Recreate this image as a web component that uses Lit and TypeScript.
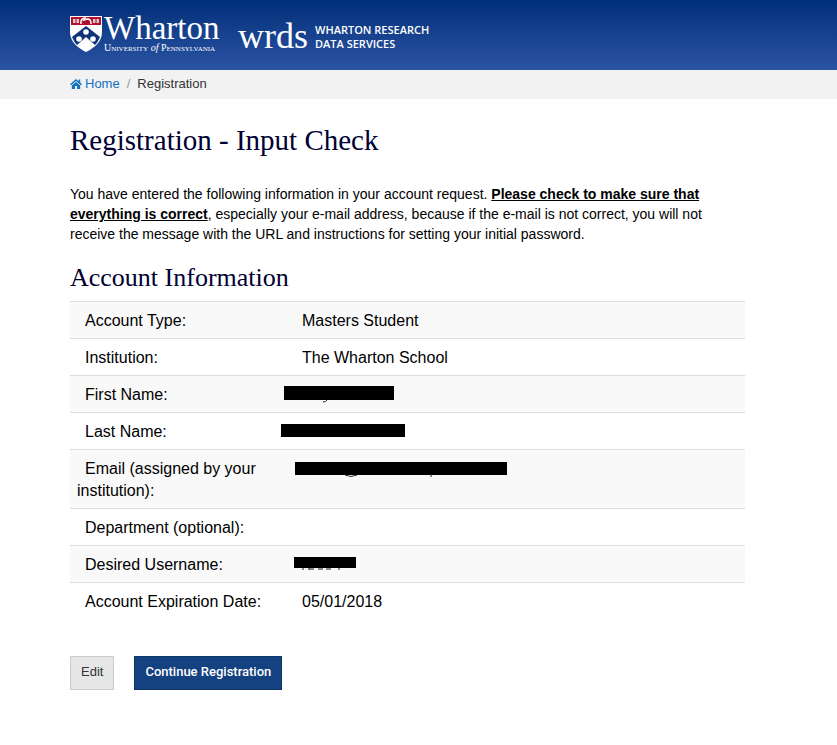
import { LitElement, html, css, svg, nothing } from "lit";
import { customElement } from "lit/decorators.js";
import { styleMap } from "lit/directives/style-map.js";

interface Mark { left: number; top: number; width: number; height: number; traces?: string }
interface Row { label: string; value?: string; mark?: Mark }

const rows: Row[] = [
  { label: "Account Type:", value: "Masters Student" },
  { label: "Institution:", value: "The Wharton School" },
  { label: "First Name:", mark: { left: -3, top: 10, width: 110, height: 14, traces: "M43 14q-1 2-4 2" } },
  { label: "Last Name:", mark: { left: -6, top: 11, width: 124, height: 13 } },
  { label: "Email (assigned by your institution):", mark: { left: 8, top: 12, width: 212, height: 13, traces: "M50 13q6 3 12 0M136 12v3" } },
  { label: "Department (optional):" },
  { label: "Desired Username:", mark: { left: 7, top: 11, width: 62, height: 11, traces: "M9 11v2M15 11v2M15 12h5M24 12h5M32 12h5M45 11v2" } },
  { label: "Account Expiration Date:", value: "05/01/2018" },
];

@customElement("site-header")
class SiteHeader extends LitElement {
  static styles = css`
    :host { display: block; }
    header {
      display: flex; box-sizing: border-box; height: 70px; padding: 14px 69px 0;
      background: linear-gradient(#022f79, #2b54a3); color: #fff;
    }
    a { display: flex; color: inherit; text-decoration: none; }
    .wharton { gap: 1px; }
    .shield { display: block; width: 34px; height: 39px; }
    .words { width: 116px; white-space: nowrap; }
    .name { display: block; font: 33px/29px "Liberation Serif", serif; }
    .school { display: block; font: 10px/10px "Liberation Serif", serif; color: #fff; }
    .school small { font-size: 7px; }
    .wrds { margin-left: 18px; gap: 7px; }
    .mark { font: 36px/44px "Liberation Serif", serif; }
    .full { padding-top: 9px; font: 600 11px/14px "Open Sans", sans-serif; white-space: nowrap; }
    .full span { display: block; }
  `;
  render() {
    return html`<header>
      <a class="wharton" href="#" aria-label="Wharton, University of Pennsylvania">
        <svg class="shield" viewBox="0 0 34 39" aria-hidden="true">
          <path d="M1 2H33V18C33 28 25 34 17 38C9 34 1 28 1 18Z" fill="#fff"/>
          <path d="M2 3H32V11H2Z" fill="#b3102e"/>
          <path d="M4 5h6v4H4zM24 5h6v4h-6z" fill="#e9c9d0"/>
          <path d="M7 5v4M27 5v4" stroke="#8e1530"/>
          <path d="M12 10V7q1-3 4-3l-1 2 3-1q4 0 4 4v1" fill="none" stroke="#fff" stroke-width="1.5"/>
          <path d="M3 23L17 12L31 23Q29 28 26 31L17 23L8 31Q5 28 3 23Z" fill="#0d3478"/>
          ${[[17, 18], [10, 25], [24, 25]].map(([x, y]) => svg`<circle cx=${x} cy=${y} r="2.8" fill="#fff"/>`)}
        </svg>
        <span class="words">
          <span class="name">Wharton</span>
          <span class="school">U<small>NIVERSITY</small> <i>of</i> P<small>ENNSYLVANIA</small></span>
        </span>
      </a>
      <a class="wrds" href="#">
        <span class="mark">wrds</span>
        <span class="full"><span>WHARTON RESEARCH</span><span>DATA SERVICES</span></span>
      </a>
    </header>`;
  }
}

@customElement("app-root")
class AppRoot extends LitElement {
  static styles = css`
    :host { display: block; font-family: "Liberation Sans", Arial, sans-serif; color: #000; }
    nav { padding: 0 70px 2px; background: #f2f2f2; font-size: 13px; line-height: 27px; }
    ol { display: flex; margin: 0; padding: 0; list-style: none; }
    .home { display: flex; align-items: center; gap: 3px; color: #1270bd; text-decoration: none; }
    .house { display: block; width: 12px; height: 12px; }
    .here { color: #333; }
    .here::before { content: "/"; padding: 0 7px; color: #999; }
    main { padding: 25px 92px 40px 70px; }
    h1, h2 { margin: 0; color: #000033; font-family: "Liberation Serif", serif; font-weight: 400; }
    h1 { font-size: 29px; line-height: 32px; }
    h2 { margin-top: 20px; font-size: 26px; line-height: 28px; }
    p { margin: 28px 0 0; font-size: 14px; line-height: 20px; }
    table { width: 100%; margin-top: 9px; border-collapse: collapse; table-layout: fixed; font-size: 16px; line-height: 22px; }
    .labels { width: 217px; }
    tr { border-top: 1px solid #ddd; }
    tr:nth-child(odd) { background: #f9f9f9; }
    th, td { padding: 8px 7px 6px; font-weight: 400; text-align: left; text-indent: 8px; vertical-align: top; }
    td { position: relative; }
    .bar { position: absolute; display: block; background: #000; overflow: visible; }
    .actions { display: flex; gap: 20px; margin-top: 37px; }
    button { height: 34px; padding: 0 10px 2px; border: 1px solid #ccc; background: #e6e6e6; color: #333; font: 13px/20px "Liberation Sans", Arial, sans-serif; }
    .primary { border-color: #0f3466; background: #14417f; color: #fff; font-family: Roboto, sans-serif; font-weight: 500; }
  `;

  private bar(m: Mark) {
    const pos = { left: `${m.left}px`, top: `${m.top}px`, width: `${m.width}px`, height: `${m.height}px` };
    return html`<svg class="bar" style=${styleMap(pos)} role="img" aria-label="Redacted">
      <path d=${m.traces ?? ""} fill="none" stroke="#222"/>
    </svg>`;
  }

  render() {
    return html`
      <site-header></site-header>
      <nav aria-label="Breadcrumb"><ol>
        <li><a class="home" href="#"><svg class="house" viewBox="0 0 12 12" aria-hidden="true">
          <path d="M6 1L0 6.2L1 7.2L6 3L11 7.2L12 6.2L10.2 4.6V1.5H8.6V3.2Z M6 4L1.8 7.5V11H5V8H7V11H10.2V7.5Z" fill="#1270bd"/>
        </svg>Home</a></li>
        <li class="here" aria-current="page">Registration</li>
      </ol></nav>
      <main>
        <h1>Registration - Input Check</h1>
        <p>You have entered the following information in your account request. <b><u>Please check to make sure that everything is correct</u></b>, especially your e-mail address, because if the e-mail is not correct, you will not receive the message with the URL and instructions for setting your initial password.</p>
        <h2>Account Information</h2>
        <table>
          <colgroup><col class="labels"><col></colgroup>
          <tbody>${rows.map((r) => html`<tr>
            <th scope="row">${r.label}</th>
            <td>${r.value ?? nothing}${r.mark ? this.bar(r.mark) : nothing}</td>
          </tr>`)}</tbody>
        </table>
        <div class="actions">
          <button type="button">Edit</button>
          <button class="primary" type="submit">Continue Registration</button>
        </div>
      </main>`;
  }
}
